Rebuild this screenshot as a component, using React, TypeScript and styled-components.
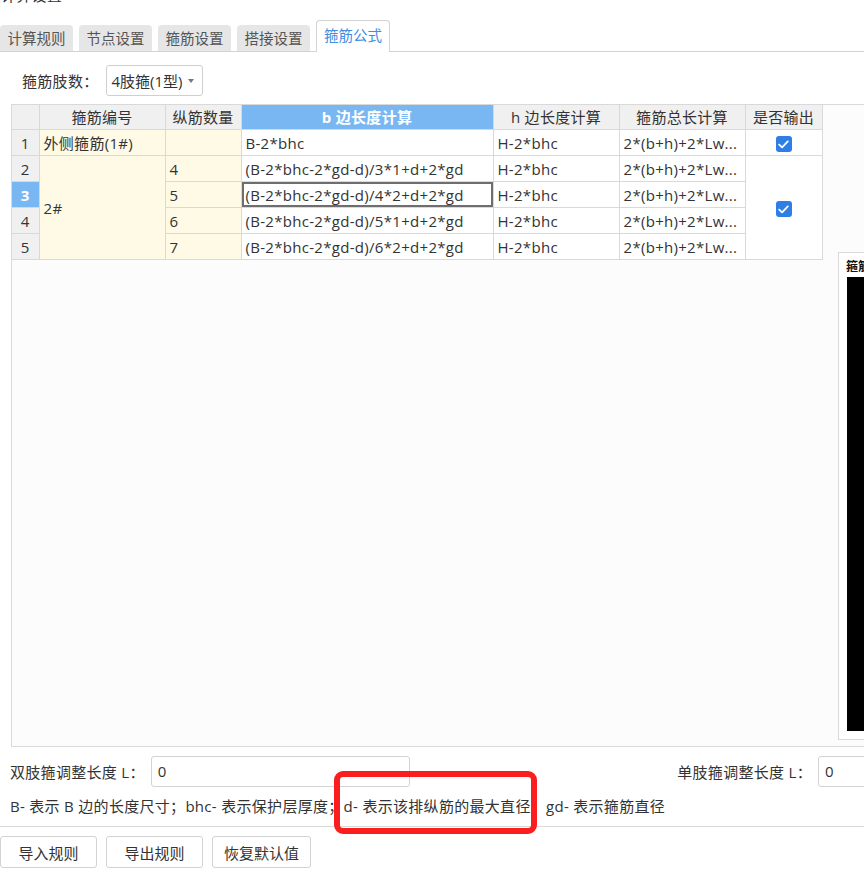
import React from 'react'
import styled, { createGlobalStyle } from 'styled-components'

const GlobalStyle = createGlobalStyle`
  html, body {
    margin: 0;
    padding: 0;
    overflow: hidden;
    background: #ffffff;
  }
  body {
    font-family: "Open Sans", "Noto Sans CJK SC", sans-serif;
    font-size: 15px;
    letter-spacing: 0.3px;
    color: #333;
  }
`

const font = `"Open Sans", "Noto Sans CJK SC", sans-serif`

const Page = styled.div`
  position: relative;
  width: 864px;
  height: 877px;
  overflow: hidden;
  background: #fff;
`

const Dialog = styled.div`
  width: 1090px;
`

const Title = styled.div`
  height: 20px;
  margin-top: -15px;
  padding-left: 1px;
  font-size: 15px;
  line-height: 20px;
  color: #333;
`

const TabStrip = styled.div`
  display: flex;
  align-items: flex-end;
  gap: 6px;
  height: 31px;
  margin-top: 15px;
  border-bottom: 1px solid #d3d3d3;
`

const Tab = styled.div<{ active?: boolean }>`
  box-sizing: border-box;
  width: ${(p) => (p.active ? '74px' : '73px')};
  height: ${(p) => (p.active ? '32px' : '26px')};
  margin-bottom: ${(p) => (p.active ? '-1px' : '0')};
  border-radius: 4px 4px 0 0;
  background: ${(p) => (p.active ? '#fff' : '#e6e6e6')};
  border: ${(p) => (p.active ? '1px solid #d3d3d3' : 'none')};
  border-bottom: none;
  color: ${(p) => (p.active ? '#3f8ee3' : '#555')};
  font-size: 14.5px;
  letter-spacing: 0;
  line-height: ${(p) => (p.active ? '30px' : '27px')};
  text-align: center;
`

const Body = styled.div`
  padding-left: 11px;
`

const SelectRow = styled.div`
  display: flex;
  align-items: center;
  gap: 7px;
  height: 31px;
  margin-top: 13px;
  padding-left: 22px;
`

const Label = styled.span`
  font-size: 15px;
  color: #333;
  white-space: nowrap;
`

const Select = styled.div`
  box-sizing: border-box;
  display: flex;
  align-items: center;
  justify-content: space-between;
  width: 97px;
  height: 31px;
  padding: 0 8px 0 5px;
  border: 1px solid #cfcfcf;
  border-radius: 3px;
  background: #fff;
  font-size: 15px;
  letter-spacing: 0;
  color: #333;
`

const Caret = styled.span`
  width: 0;
  height: 0;
  border-left: 3px solid transparent;
  border-right: 3px solid transparent;
  border-top: 4px solid #777;
`

const GridFrame = styled.div`
  display: flex;
  height: 641px;
  margin-top: 8px;
  border: 1px solid #d9d9d9;
  border-right: none;
  background: #fcfcfc;
`

const GridArea = styled.div`
  width: 826px;
  flex: none;
`

const Table = styled.table`
  border-collapse: collapse;
  table-layout: fixed;
  width: 810px;
  font-family: ${font};
  font-size: 15px;
  line-height: 20px;
  color: #333;
  background: #fff;
`

const Th = styled.th<{ selected?: boolean }>`
  height: 24px;
  padding: 0;
  border: 1px solid #d9d9d9;
  border-top: none;
  background: ${(p) => (p.selected ? '#79b7f3' : '#f0f0f0')};
  color: ${(p) => (p.selected ? '#fff' : '#333')};
  font-weight: ${(p) => (p.selected ? 700 : 400)};
  text-align: center;
  white-space: nowrap;
  &:first-child {
    border-left: none;
  }
`

const RowHead = styled.td<{ selected?: boolean }>`
  height: 25px;
  padding: 0;
  border: 1px solid #d9d9d9;
  border-left: none;
  background: ${(p) => (p.selected ? '#79b7f3' : '#f0f0f0')};
  color: ${(p) => (p.selected ? '#fff' : '#333')};
  font-weight: ${(p) => (p.selected ? 700 : 400)};
  text-align: center;
`

const Cell = styled.td<{ tint?: boolean; current?: boolean; center?: boolean }>`
  position: relative;
  height: 25px;
  padding: 0 4px;
  border: 1px solid #d9d9d9;
  background: ${(p) => (p.tint ? '#fefae6' : '#fff')};
  box-shadow: ${(p) => (p.current ? 'inset 0 0 0 2px #6e6e6e' : 'none')};
  text-align: ${(p) => (p.center ? 'center' : 'left')};
  vertical-align: middle;
  white-space: nowrap;
  overflow: hidden;
  &::after {
    content: '';
    display: ${(p) => (p.current ? 'block' : 'none')};
    position: absolute;
    right: -3px;
    bottom: -3px;
    width: 5px;
    height: 5px;
    background: #6e6e6e;
  }
`

const CheckBox = styled.span`
  display: inline-flex;
  align-items: center;
  justify-content: center;
  width: 16px;
  height: 16px;
  border-radius: 3px;
  background: #2d7fe6;
  vertical-align: middle;
`

const Preview = styled.div`
  box-sizing: border-box;
  width: 240px;
  height: 488px;
  margin-top: 147px;
  padding: 8px;
  border: 1px solid #d9d9d9;
  background: #fff;
  display: flex;
  flex-direction: column;
`

const PreviewTitle = styled.div`
  font-size: 12px;
  font-weight: 700;
  line-height: 12px;
  letter-spacing: 0;
  color: #111;
  margin-left: -1px;
`

const Canvas = styled.div`
  flex: 1;
  margin-top: 4px;
  background: #000;
`

const AdjustRow = styled.div`
  display: flex;
  align-items: center;
  height: 31px;
  margin-top: 9px;
  padding: 0 13px 0 10px;
`

const AdjustGroup = styled.div<{ right?: boolean }>`
  display: flex;
  align-items: center;
  gap: 6px;
  margin-left: ${(p) => (p.right ? 'auto' : '0')};
`

const TextInput = styled.div`
  box-sizing: border-box;
  width: 259px;
  height: 31px;
  padding: 0 6px;
  border: 1px solid #d3d3d3;
  border-radius: 3px;
  background: #fff;
  font-size: 15px;
  line-height: 29px;
  color: #333;
`

const Legend = styled.div`
  height: 32px;
  padding-left: 10px;
  margin-top: 3px;
  font-size: 15px;
  line-height: 32px;
  color: #333;
  white-space: nowrap;
`

const Footer = styled.div`
  display: flex;
  gap: 9px;
  margin-top: 4px;
  padding-top: 9px;
  border-top: 1px solid #d9d9d9;
`

const Button = styled.button<{ wide?: boolean }>`
  box-sizing: border-box;
  width: ${(p) => (p.wide ? '99px' : '97px')};
  height: 32px;
  padding: 0;
  border: 1px solid #d3d3d3;
  border-radius: 3px;
  background: #fff;
  font-family: ${font};
  font-size: 15px;
  color: #333;
`

const Annotation = styled.div`
  position: absolute;
  left: 334px;
  top: 771px;
  width: 203px;
  height: 63px;
  box-sizing: border-box;
  border: 6px solid #fa1e1e;
  border-radius: 9px;
  pointer-events: none;
`

const Check = () => (
  <CheckBox>
    <svg width="11" height="9" viewBox="0 0 11 9">
      <path d="M1.2 4.6 L4.1 7.4 L9.8 1.4" fill="none" stroke="#fff" strokeWidth="1.8" strokeLinecap="round" strokeLinejoin="round" />
    </svg>
  </CheckBox>
)

const tabs = ['计算规则', '节点设置', '箍筋设置', '搭接设置', '箍筋公式']

const rows = [
  { n: 4, b: '(B-2*bhc-2*gd-d)/3*1+d+2*gd' },
  { n: 5, b: '(B-2*bhc-2*gd-d)/4*2+d+2*gd' },
  { n: 6, b: '(B-2*bhc-2*gd-d)/5*1+d+2*gd' },
  { n: 7, b: '(B-2*bhc-2*gd-d)/6*2+d+2*gd' },
]

const App = () => {
  return (
    <Page>
      <GlobalStyle />
      <Dialog>
        <Title>计算设置</Title>
        <TabStrip>
          {tabs.map((t, i) => (
            <Tab key={t} active={i === 4}>{t}</Tab>
          ))}
        </TabStrip>

        <SelectRow>
          <Label>箍筋肢数：</Label>
          <Select>
            <span>4肢箍(1型)</span>
            <Caret />
          </Select>
        </SelectRow>

        <Body>
          <GridFrame>
            <GridArea>
              <Table>
                <colgroup>
                  <col style={{ width: 27 }} />
                  <col style={{ width: 126 }} />
                  <col style={{ width: 76 }} />
                  <col style={{ width: 252 }} />
                  <col style={{ width: 126 }} />
                  <col style={{ width: 126 }} />
                  <col style={{ width: 77 }} />
                </colgroup>
                <thead>
                  <tr>
                    <Th></Th>
                    <Th>箍筋编号</Th>
                    <Th>纵筋数量</Th>
                    <Th selected>b 边长度计算</Th>
                    <Th>h 边长度计算</Th>
                    <Th>箍筋总长计算</Th>
                    <Th>是否输出</Th>
                  </tr>
                </thead>
                <tbody>
                  <tr>
                    <RowHead>1</RowHead>
                    <Cell tint>外侧箍筋(1#)</Cell>
                    <Cell tint></Cell>
                    <Cell>B-2*bhc</Cell>
                    <Cell>H-2*bhc</Cell>
                    <Cell>2*(b+h)+2*Lw...</Cell>
                    <Cell center><Check /></Cell>
                  </tr>
                  {rows.map((r, i) => (
                    <tr key={r.n}>
                      <RowHead selected={i === 1}>{i + 2}</RowHead>
                      {i === 0 && <Cell tint rowSpan={4}>2#</Cell>}
                      <Cell tint>{r.n}</Cell>
                      <Cell current={i === 1}>{r.b}</Cell>
                      <Cell>H-2*bhc</Cell>
                      <Cell>2*(b+h)+2*Lw...</Cell>
                      {i === 0 && <Cell center rowSpan={4}><Check /></Cell>}
                    </tr>
                  ))}
                </tbody>
              </Table>
            </GridArea>
            <Preview>
              <PreviewTitle>箍筋示意图</PreviewTitle>
              <Canvas />
            </Preview>
          </GridFrame>
        </Body>

        <AdjustRow>
          <AdjustGroup>
            <Label>双肢箍调整长度 L：</Label>
            <TextInput>0</TextInput>
          </AdjustGroup>
          <AdjustGroup right>
            <Label>单肢箍调整长度 L：</Label>
            <TextInput>0</TextInput>
          </AdjustGroup>
        </AdjustRow>

        <Legend>B- 表示 B 边的长度尺寸；bhc- 表示保护层厚度；d- 表示该排纵筋的最大直径；gd- 表示箍筋直径</Legend>

        <Footer>
          <Button>导入规则</Button>
          <Button>导出规则</Button>
          <Button wide>恢复默认值</Button>
        </Footer>
      </Dialog>
      <Annotation />
    </Page>
  )
}

export default App
